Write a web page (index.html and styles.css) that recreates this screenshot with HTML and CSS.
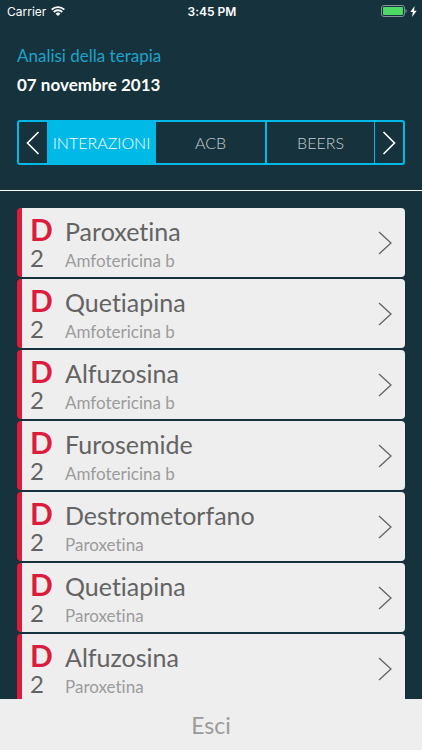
FILE: index.html
```
<!DOCTYPE html>
<html lang="it">
<head>
  <meta charset="utf-8">
  <meta name="viewport" content="width=device-width, initial-scale=1">
  <title>Analisi della terapia</title>
  <link rel="stylesheet" href="styles.css">
</head>
<body>
  <div class="screen">
    <div class="status-bar">
      <div class="carrier">
        <span>Carrier</span>
        <svg class="wifi" viewBox="0 0 14 10">
          <path d="M0.7 3.700a8.900 8.900 0 0 1 12.600 0M2.800 6a5.900 5.900 0 0 1 8.400 0" fill="none" stroke="#fff" stroke-width="1.900"/>
          <path d="M4.600 7.700a3.300 3.300 0 0 1 4.800 0L7 10z" fill="#fff"/>
        </svg>
      </div>
      <div class="time">3:45 PM</div>
      <div class="battery">
        <svg class="battery-icon" viewBox="0 0 26 12">
          <rect x="0.5" y="0.5" width="23" height="11" rx="2.5" fill="none" stroke="#84939a"/>
          <rect x="2" y="2" width="20" height="8" rx="1" fill="#4cd964"/>
          <path d="M24.500 4v4c1.600-.6 1.600-3.400 0-4z" fill="#84939a"/>
        </svg>
        <svg class="bolt" viewBox="0 0 7 11">
          <path d="M4.600 0L0.300 6h2.500L2 11l4.700-6.300H4z" fill="#fff"/>
        </svg>
      </div>
    </div>

    <header class="header">
      <h1>Analisi della terapia</h1>
      <p class="date">07 novembre 2013</p>
      <nav class="tabs">
        <button class="tab-arrow" type="button" aria-label="Precedente">
          <svg viewBox="0 0 14 24"><path d="M12.500 1L1.500 12l11 11"/></svg>
        </button>
        <button class="tab active" type="button">INTERAZIONI</button>
        <button class="tab" type="button">ACB</button>
        <button class="tab" type="button">BEERS</button>
        <button class="tab-arrow next" type="button" aria-label="Successivo">
          <svg viewBox="0 0 14 24"><path d="M1.500 1l11 11-11 11"/></svg>
        </button>
      </nav>
    </header>

    <main class="list">
      <button class="item" type="button">
        <span class="rank"><span class="grade">D</span><span class="level">2</span></span>
        <span class="drugs"><span class="name">Paroxetina</span><span class="with">Amfotericina b</span></span>
        <svg class="chevron" viewBox="0 0 14 24"><path d="M1 1l12 11L1 23"/></svg>
      </button>
      <button class="item" type="button">
        <span class="rank"><span class="grade">D</span><span class="level">2</span></span>
        <span class="drugs"><span class="name">Quetiapina</span><span class="with">Amfotericina b</span></span>
        <svg class="chevron" viewBox="0 0 14 24"><path d="M1 1l12 11L1 23"/></svg>
      </button>
      <button class="item" type="button">
        <span class="rank"><span class="grade">D</span><span class="level">2</span></span>
        <span class="drugs"><span class="name">Alfuzosina</span><span class="with">Amfotericina b</span></span>
        <svg class="chevron" viewBox="0 0 14 24"><path d="M1 1l12 11L1 23"/></svg>
      </button>
      <button class="item" type="button">
        <span class="rank"><span class="grade">D</span><span class="level">2</span></span>
        <span class="drugs"><span class="name">Furosemide</span><span class="with">Amfotericina b</span></span>
        <svg class="chevron" viewBox="0 0 14 24"><path d="M1 1l12 11L1 23"/></svg>
      </button>
      <button class="item" type="button">
        <span class="rank"><span class="grade">D</span><span class="level">2</span></span>
        <span class="drugs"><span class="name">Destrometorfano</span><span class="with">Paroxetina</span></span>
        <svg class="chevron" viewBox="0 0 14 24"><path d="M1 1l12 11L1 23"/></svg>
      </button>
      <button class="item" type="button">
        <span class="rank"><span class="grade">D</span><span class="level">2</span></span>
        <span class="drugs"><span class="name">Quetiapina</span><span class="with">Paroxetina</span></span>
        <svg class="chevron" viewBox="0 0 14 24"><path d="M1 1l12 11L1 23"/></svg>
      </button>
      <button class="item" type="button">
        <span class="rank"><span class="grade">D</span><span class="level">2</span></span>
        <span class="drugs"><span class="name">Alfuzosina</span><span class="with">Paroxetina</span></span>
        <svg class="chevron" viewBox="0 0 14 24"><path d="M1 1l12 11L1 23"/></svg>
      </button>
    </main>

    <button class="exit" type="button">Esci</button>
  </div>
</body>
</html>
```

FILE: styles.css
```
:root {
  --background: #16323c;
  --accent: #00b9e6;
  --danger: #dc1c3c;
  --panel: #eeeeee;
  --text: #636363;
  --text-light: #9b9b9b;
}

* {
  margin: 0;
  padding: 0;
  box-sizing: border-box;
}

body {
  font-family: Lato, "Open Sans", sans-serif;
  font-variant-ligatures: none;
  color: white;
  background: var(--background);
}

button {
  font: inherit;
  font-variant-ligatures: none;
  color: inherit;
  background: none;
  border: 0;
  cursor: pointer;
}

svg {
  display: block;
}

.screen {
  display: flex;
  flex-direction: column;
  height: 100vh;
}

/* Status bar */
.status-bar {
  display: grid;
  grid-template-columns: 1fr auto 1fr;
  align-items: center;
  flex-shrink: 0;
  height: 22px;
  padding: 0 5px 0 7px;
  font-family: Inter, Roboto, sans-serif;
  font-size: 12px;
}

.carrier,
.battery {
  display: flex;
  align-items: center;
}

.carrier {
  gap: 5px;
}

.wifi {
  width: 14px;
  height: 10px;
}

.time {
  font-weight: 600;
}

.battery {
  justify-content: flex-end;
  gap: 3px;
}

.battery-icon {
  width: 26px;
  height: 12px;
}

.bolt {
  width: 7px;
  height: 11px;
}

/* Header */
.header {
  flex-shrink: 0;
  padding: 20px 17px 25px;
  border-bottom: 1px solid white;
}

h1 {
  font-size: 17px;
  font-weight: 400;
  line-height: 28px;
  color: #1ba4cb;
}

.date {
  font-size: 17px;
  font-weight: 700;
  line-height: 30px;
}

.tabs {
  display: grid;
  grid-template-columns: 28px 1fr 1fr 1fr 29px;
  height: 45px;
  margin-top: 20px;
  border: 2px solid var(--accent);
  border-radius: 3px;
}

.tab {
  font-size: 16px;
  font-weight: 300;
  color: #c5ced2;
}

.tab.active {
  color: white;
  background: var(--accent);
}

.tab + .tab:not(.active) + .tab {
  border-left: 2px solid var(--accent);
}

.tab-arrow {
  display: flex;
  align-items: center;
  justify-content: center;
}

.tab-arrow.next {
  border-left: 1px solid var(--accent);
}

.tab-arrow svg {
  width: 14px;
  height: 24px;
  fill: none;
  stroke: white;
  stroke-width: 1.6;
}

/* Interactions */
.list {
  display: flex;
  flex: 1;
  flex-direction: column;
  gap: 2px;
  min-height: 0;
  padding: 17px 17px 0;
  overflow-y: auto;
  scrollbar-width: none;
}

.item {
  display: flex;
  flex-shrink: 0;
  height: 69px;
  padding: 7px 13px 0 8px;
  color: var(--text);
  text-align: left;
  background: var(--panel);
  border-left: 5px solid var(--danger);
  border-radius: 4px;
}

.rank {
  display: flex;
  flex-direction: column;
  width: 35px;
}

.grade {
  font-size: 30px;
  font-weight: 700;
  line-height: 29px;
  color: var(--danger);
}

.level {
  font-size: 24px;
  line-height: 27px;
}

.drugs {
  display: flex;
  flex: 1;
  flex-direction: column;
}

.name {
  font-size: 25px;
  line-height: 32px;
}

.with {
  font-size: 17px;
  line-height: 28px;
  color: var(--text-light);
}

.chevron {
  width: 14px;
  height: 24px;
  margin-top: 16px;
  fill: none;
  stroke: var(--text);
  stroke-width: 1.3;
}

.exit {
  flex-shrink: 0;
  height: 51px;
  font-size: 23px;
  color: var(--text-light);
  background: var(--panel);
}
```
